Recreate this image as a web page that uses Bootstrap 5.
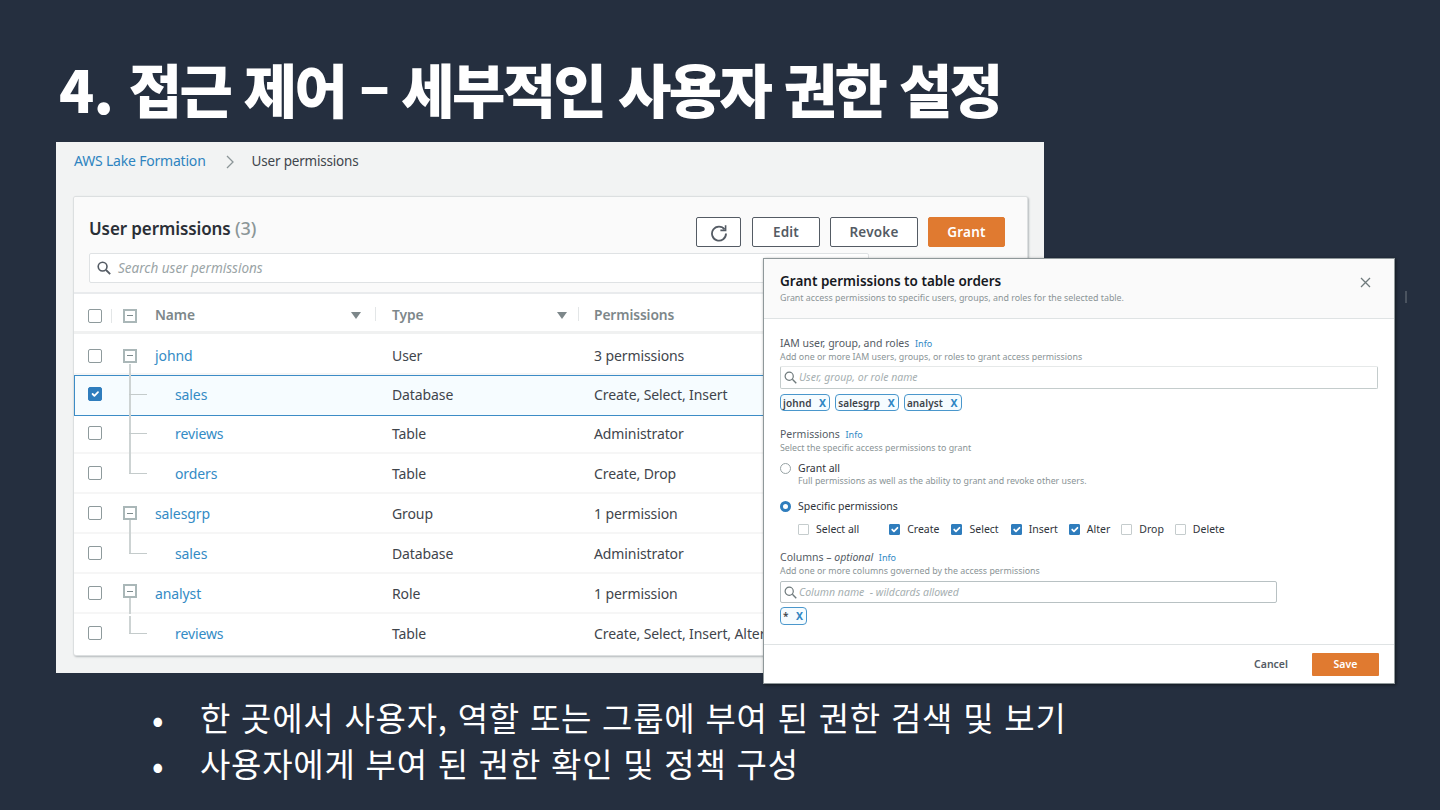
<!DOCTYPE html>
<html lang="ko">
<head>
    <meta charset="UTF-8">
    <meta name="viewport" content="width=device-width, initial-scale=1.0">
    <title>접근 제어</title>
    <link rel="stylesheet" href="https://cdn.jsdelivr.net/npm/bootstrap@5.3.2/dist/css/bootstrap.min.css">
    <style>
        html, body { height: 810px; overflow: hidden; }
        body { background: #252f3f; font-family: "Noto Sans", "Noto Sans CJK KR", sans-serif; color: #16191f; }
        .slide { width: 1440px; height: 810px; position: relative; }
        .slide-title { height: 142px; padding: 49px 0 0 59px; margin: 0; color: #fff; font-family: "Noto Sans CJK KR", sans-serif; font-weight: 900; font-size: 58px; line-height: 78px; letter-spacing: -2.6px; white-space: nowrap; }
        .title-num { letter-spacing: -.8px; }
        .shot { width: 988px; height: 531px; margin-left: 56px; background: #f2f3f3; padding: 0 17px 0 18px; }
        .crumbs { height: 55px; margin: 0; padding-top: 9px; font-size: 14px; line-height: 20px; letter-spacing: -.2px; color: #3f454c; }
        .crumbs a { color: #2e84c0; text-decoration: none; }
        .crumbs span { font-size: 13.5px; }
        .crumbs .crumb-sep { margin: 0 17px 0 20px; }
        .perm-card { height: 458px; background: #fff; border: 0; border-radius: 2px; box-shadow: 0 0 0 1px #dcdfe0, 1px 1px 2px 1px #b4b9bb; overflow: hidden; }
        .perm-head { height: 97px; background: #fafafa; border-bottom: 2px solid #e9ebed; padding: 20px 22px 10px 15px; }
        .perm-title { font-size: 17px; font-weight: 600; line-height: 22px; color: #2a2f36; margin: 0; letter-spacing: -.1px; }
        .perm-title span { color: #8b9698; font-weight: 500; font-size: 18px; }
        .btn-gap { gap: 10px; }
        .aws-btn { height: 30px; padding: 0; font-size: 13.5px; font-weight: 600; line-height: 26px; letter-spacing: .2px; color: #545b64; background: #fff; border: 1px solid #545b64; border-radius: 2px; }
        .btn-refresh { width: 45px; margin-right: 1px; }
        .btn-edit { width: 68px; }
        .btn-revoke { width: 88px; }
        .btn-grant { width: 77px; background: #e07a30; border-color: #e07a30; color: #fff; }
        .search-box { display: flex; align-items: center; background: #fff; border: 1px solid #dfe2e4; border-radius: 2px; color: #9aa4a6; font-style: italic; }
        .search-main { width: 780px; height: 30px; margin-top: 6px; padding-left: 7px; gap: 7px; font-size: 13.5px; }
        .perm-row { display: grid; grid-template-columns: 49px 32px 237px 202px 1fr; align-items: center; height: 40px; font-size: 14px; color: #3f454c; border-bottom: 2px solid #f6f6f6; letter-spacing: -.1px; }
        .perm-row a { color: #348bc5; text-decoration: none; }
        .row-cols-head { height: 40px; padding-top: 6px; border-bottom: 3px solid #f0f1f1; color: #7d878a; font-weight: 600; font-size: 13.8px; }
        .row-41 { height: 41px; padding-top: 4px; }
        .row-38 { height: 38px; padding-bottom: 2px; }
        .row-35 { height: 35px; padding-top: 3px; border-bottom: 0; }
        .row-sel { padding-top: 0; padding-bottom: 3px; background: #f6fcff; box-shadow: inset 0 0 0 1px #3c8cc6; border-bottom: 0; }
        .cell-check { padding-left: 14px; display: flex; align-items: center; position: relative; }
        .form-check-input.box { width: 14px; height: 14px; margin: 0; border: 1px solid #8e9a9c; border-radius: 2px; background-color: #fff; }
        .form-check-input.box:checked { background-color: #2f7dbd; border-color: #2f7dbd; }
        .form-check-input:checked { background-color: #2f7dbd; border-color: #2f7dbd; }
        .form-check-input.box-small { width: 11px; height: 11px; margin: 0; border: 1px solid #c5cccd; border-radius: 1px; flex: none; }
        .form-check-input.box-small:checked { border-color: #2f7dbd; background-size: 130%; }
        .form-check-input.radio-small { width: 11px; height: 11px; margin: 0; border: 1px solid #98a3a5; flex: none; }
        .form-check-input.radio-small:checked { background-image: none; background-color: #fff; border: 3.5px solid #2f7dbd; }
        .tree-cell { position: relative; height: 100%; display: flex; align-items: center; }
        .expand-box { display: flex; align-items: center; justify-content: center; width: 14px; height: 14px; background: #fff; border: 2px solid #aab7b8; position: relative; z-index: 1; }
        .expand-box::after { content: ""; width: 6px; height: 1px; background: #7d8b8d; }
        .tree-from::before { content: ""; position: absolute; left: 6px; top: 26px; bottom: -2px; width: 2px; background: #cdd3d3; }
        .tree-up::before { content: ""; position: absolute; left: 6px; top: -1px; bottom: -2px; width: 2px; background: #cdd3d3; }
        .row-sel .tree-up::before { bottom: -3px; }
        .row-38 .tree-up::before { bottom: -4px; }
        .tree-end::before { bottom: 50%; }
        .tree-up::after { content: ""; position: absolute; left: 6px; top: 50%; width: 18px; height: 1px; background: #c4cbcb; }
        .tree-from.box-high { align-items: flex-start; padding-top: 12px; }
        .tree-from.box-high::before { top: 26px; }
        .tree-from.box-top { align-items: flex-start; padding-top: 10px; }
        .tree-from.box-top::before { top: 24px; }
        .cell-child { padding-left: 20px; }
        .cell-head { display: flex; align-items: center; justify-content: space-between; position: relative; }
        .head-name { padding-right: 31px; }
        .head-type { padding-right: 27px; }
        .cell-head::after { content: ""; position: absolute; right: 16px; top: 2px; height: 14px; width: 1px; background: #e3e6e7; }
        .head-type::after { right: 15px; }
        .sort-down { width: 0; height: 0; border-left: 5px solid transparent; border-right: 5px solid transparent; border-top: 7px solid #7d878a; }
        .head-sep { position: absolute; left: 37px; top: 0; height: 14px; width: 1px; background: #e3e6e7; }

        .grant-dlg { position: absolute; left: 763px; top: 258px; width: 632px; height: 426px; border: 1px solid #8f989a; border-radius: 0; background: #fff; box-shadow: 1px 1px 3px rgba(0,0,0,.5); font-size: 10.5px; color: #2f343a; }
        .grant-dlg .card-header { height: 61px; padding: 13px 15px 0 16px; background: #fafafa; border-bottom: 1px solid #dfe3e4; border-radius: 0; }
        .dlg-title { font-size: 13.5px; font-weight: 600; line-height: 18px; color: #16191f; margin: 0; }
        .dlg-hint { font-size: 8.85px; line-height: 12px; color: #8a9496; }
        .dlg-sub { margin-top: 2px; }
        .dlg-close { position: absolute; right: 23px; top: 18px; }
        .grant-dlg .card-body { padding: 17px 16px 0 16px; height: 325px; flex: none; }
        .dlg-label { line-height: 14px; color: #545b64; }
        .dlg-info { color: #3189c5; font-size: 9px; margin-left: 3px; }
        .search-dlg { height: 23px; margin-top: 3px; padding-left: 3px; gap: 2px; font-size: 10.5px; border-color: #c4cccc; border-top-color: #e6e9e9; color: #a6afb1; }
        .search-cols { width: 497px; height: 22px; margin-top: 4px; border-color: #b8c1c3; }
        .token-row { display: flex; gap: 5px; height: 17px; margin-top: 5px; }
        .token-row-cols { height: 18px; margin-top: 4px; }
        .token { display: inline-flex; align-items: center; justify-content: space-between; padding: 0 3px 0 2px; background: #f6fcff; border: 1px solid #4a97cc; border-radius: 4px; font-weight: 600; font-size: 10px; line-height: 1; letter-spacing: .1px; color: #3d434a; }
        .token b { color: #2f86c4; font-weight: 700; font-size: 10.5px; margin-left: 7.5px; }
        .perm-opt { display: flex; align-items: center; gap: 7px; line-height: 14px; }
        .opt-note { padding-left: 18px; line-height: 12px; font-size: 8.85px; color: #8a9496; }
        .check-row { display: flex; height: 14px; margin-top: 9px; padding-left: 18px; }
        .check-item { display: flex; align-items: center; gap: 7px; line-height: 14px; margin: 0; }
        .gap-after-all { margin-right: 30px; }
        .gap-item { margin-right: 12px; }
        .gap-tight { margin-right: 11px; }
        .grant-dlg .card-footer { height: 39px; padding: 8px 15px 0 0; background: #fff; border-top: 1px solid #dfe3e4; border-radius: 0; display: flex; justify-content: flex-end; }
        .dlg-cancel { font-size: 10.5px; font-weight: 600; color: #545b64; line-height: 22px; margin-right: 24px; }
        .dlg-save { width: 67px; height: 23px; padding: 0; font-size: 10.5px; font-weight: 600; color: #fff; background: #e07a30; border: 0; border-radius: 1px; }
        .mt-16 { margin-top: 16px; }
        .mt-7 { margin-top: 7px; }
        .mt-12 { margin-top: 12px; }
        .mt-14 { margin-top: 14px; }

        .bullets { margin: 22px 0 0 140px; padding: 0 0 0 60px; list-style: none; color: #fff; font-family: "Noto Sans CJK KR", sans-serif; font-size: 33px; line-height: 45.5px; letter-spacing: .75px; white-space: nowrap; }
        .bullets li::before { content: "•"; position: absolute; margin-left: -48px; font-size: 34px; }
        .edge-tick { position: absolute; left: 1405px; top: 291px; width: 2px; height: 12px; background: #4a535f; }
    </style>
</head>
<body>
<div class="slide">
    <h1 class="slide-title"><span class="title-num">4. </span>접근 제어 – 세부적인 사용자 권한 설정</h1>

    <div class="shot">
        <div class="crumbs">
            <a href="#">AWS Lake Formation</a><svg class="crumb-sep" width="9" height="14" viewBox="0 0 9 14"><path d="M1 1l6 6-6 6" fill="none" stroke="#8c9597" stroke-width="1.3"/></svg><span>User permissions</span>
        </div>

        <div class="card perm-card">
            <div class="perm-head">
                <div class="d-flex justify-content-between align-items-start">
                    <h2 class="perm-title">User permissions <span>(3)</span></h2>
                    <div class="d-flex btn-gap align-items-center">
                        <button class="btn aws-btn btn-refresh" aria-label="Refresh">
                            <svg width="18" height="18" viewBox="0 0 18 18"><path d="M14.6 5.4A7 7 0 1 0 16 9.5" fill="none" stroke="#545b64" stroke-width="1.8"/><path d="M15.6 1.2v5.2h-5.2" fill="none" stroke="#545b64" stroke-width="1.6"/></svg>
                        </button>
                        <button class="btn aws-btn btn-edit">Edit</button>
                        <button class="btn aws-btn btn-revoke">Revoke</button>
                        <button class="btn aws-btn btn-grant">Grant</button>
                    </div>
                </div>
                <div class="search-box search-main">
                    <svg width="14" height="14" viewBox="0 0 14 14"><circle cx="5.6" cy="5.6" r="4.4" fill="none" stroke="#545b64" stroke-width="1.6"/><path d="M9 9l4.2 4.2" stroke="#545b64" stroke-width="1.8"/></svg>
                    <span>Search user permissions</span>
                </div>
            </div>

            <div class="perm-row row-cols-head">
                <div class="cell-check"><input class="form-check-input box" type="checkbox"><span class="head-sep"></span></div>
                <div class="tree-cell"><span class="expand-box"></span></div>
                <div class="cell-head head-name">Name <span class="sort-down"></span></div>
                <div class="cell-head head-type">Type <span class="sort-down"></span></div>
                <div>Permissions</div>
            </div>
            <div class="perm-row row-41">
                <div class="cell-check"><input class="form-check-input box" type="checkbox"></div>
                <div class="tree-cell tree-from"><span class="expand-box"></span></div>
                <div><a href="#">johnd</a></div><div>User</div><div>3 permissions</div>
            </div>
            <div class="perm-row row-41 row-sel">
                <div class="cell-check"><input class="form-check-input box" type="checkbox" checked></div>
                <div class="tree-cell tree-up"></div>
                <div class="cell-child"><a href="#">sales</a></div><div>Database</div><div>Create, Select, Insert</div>
            </div>
            <div class="perm-row row-38">
                <div class="cell-check"><input class="form-check-input box" type="checkbox"></div>
                <div class="tree-cell tree-up"></div>
                <div class="cell-child"><a href="#">reviews</a></div><div>Table</div><div>Administrator</div>
            </div>
            <div class="perm-row">
                <div class="cell-check"><input class="form-check-input box" type="checkbox"></div>
                <div class="tree-cell tree-up tree-end"></div>
                <div class="cell-child"><a href="#">orders</a></div><div>Table</div><div>Create, Drop</div>
            </div>
            <div class="perm-row">
                <div class="cell-check"><input class="form-check-input box" type="checkbox"></div>
                <div class="tree-cell tree-from box-high"><span class="expand-box"></span></div>
                <div><a href="#">salesgrp</a></div><div>Group</div><div>1 permission</div>
            </div>
            <div class="perm-row">
                <div class="cell-check"><input class="form-check-input box" type="checkbox"></div>
                <div class="tree-cell tree-up tree-end"></div>
                <div class="cell-child"><a href="#">sales</a></div><div>Database</div><div>Administrator</div>
            </div>
            <div class="perm-row">
                <div class="cell-check"><input class="form-check-input box" type="checkbox"></div>
                <div class="tree-cell tree-from box-top"><span class="expand-box"></span></div>
                <div><a href="#">analyst</a></div><div>Role</div><div>1 permission</div>
            </div>
            <div class="perm-row row-35">
                <div class="cell-check"><input class="form-check-input box" type="checkbox"></div>
                <div class="tree-cell tree-up tree-end"></div>
                <div class="cell-child"><a href="#">reviews</a></div><div>Table</div><div>Create, Select, Insert, Alter</div>
            </div>
        </div>
    </div>

    <ul class="bullets">
        <li>한 곳에서 사용자, 역할 또는 그룹에 부여 된 권한 검색 및 보기</li>
        <li>사용자에게 부여 된 권한 확인 및 정책 구성</li>
    </ul>

    <div class="card grant-dlg">
        <div class="card-header">
            <h3 class="dlg-title">Grant permissions to table orders</h3>
            <div class="dlg-hint dlg-sub">Grant access permissions to specific users, groups, and roles for the selected table.</div>
            <svg class="dlg-close" width="11" height="11" viewBox="0 0 11 11"><path d="M1 1l9 9M10 1l-9 9" stroke="#6f7a7c" stroke-width="1.3"/></svg>
        </div>
        <div class="card-body">
            <div class="dlg-label">IAM user, group, and roles <span class="dlg-info">Info</span></div>
            <div class="dlg-hint">Add one or more IAM users, groups, or roles to grant access permissions</div>
            <div class="search-box search-dlg">
                <svg width="13" height="13" viewBox="0 0 14 14"><circle cx="5.6" cy="5.6" r="4.4" fill="none" stroke="#6f7a7c" stroke-width="1.3"/><path d="M9 9l4.2 4.2" stroke="#6f7a7c" stroke-width="1.5"/></svg>
                <span>User, group, or role name</span>
            </div>
            <div class="token-row">
                <span class="token">johnd <b>X</b></span>
                <span class="token">salesgrp <b>X</b></span>
                <span class="token">analyst <b>X</b></span>
            </div>

            <div class="dlg-label mt-16">Permissions <span class="dlg-info">Info</span></div>
            <div class="dlg-hint">Select the specific access permissions to grant</div>
            <div class="perm-opt mt-7"><input class="form-check-input radio-small" type="radio" name="scope"> Grant all</div>
            <div class="opt-note">Full permissions as well as the ability to grant and revoke other users.</div>
            <div class="perm-opt mt-12"><input class="form-check-input radio-small" type="radio" name="scope" checked> Specific permissions</div>
            <div class="check-row">
                <label class="check-item gap-after-all"><input class="form-check-input box-small" type="checkbox"> Select all</label>
                <label class="check-item gap-item"><input class="form-check-input box-small" type="checkbox" checked> Create</label>
                <label class="check-item gap-item"><input class="form-check-input box-small" type="checkbox" checked> Select</label>
                <label class="check-item gap-tight"><input class="form-check-input box-small" type="checkbox" checked> Insert</label>
                <label class="check-item gap-tight"><input class="form-check-input box-small" type="checkbox" checked> Alter</label>
                <label class="check-item gap-tight"><input class="form-check-input box-small" type="checkbox"> Drop</label>
                <label class="check-item"><input class="form-check-input box-small" type="checkbox"> Delete</label>
            </div>

            <div class="dlg-label mt-14">Columns – <em>optional</em> <span class="dlg-info">Info</span></div>
            <div class="dlg-hint">Add one or more columns governed by the access permissions</div>
            <div class="search-box search-dlg search-cols">
                <svg width="13" height="13" viewBox="0 0 14 14"><circle cx="5.6" cy="5.6" r="4.4" fill="none" stroke="#6f7a7c" stroke-width="1.3"/><path d="M9 9l4.2 4.2" stroke="#6f7a7c" stroke-width="1.5"/></svg>
                <span>Column name &nbsp;- wildcards allowed</span>
            </div>
            <div class="token-row token-row-cols"><span class="token">* <b>X</b></span></div>
        </div>
        <div class="card-footer">
            <span class="dlg-cancel">Cancel</span>
            <button class="btn dlg-save">Save</button>
        </div>
    </div>
    <span class="edge-tick"></span>
</div>
<script src="https://cdn.jsdelivr.net/npm/bootstrap@5.3.2/dist/js/bootstrap.bundle.min.js"></script>
</body>
</html>
